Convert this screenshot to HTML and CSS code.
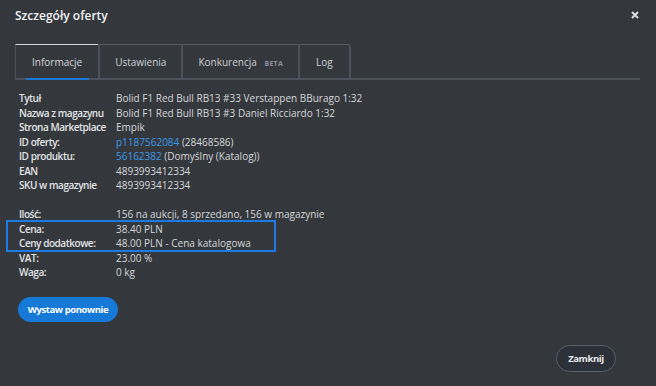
FILE: index.html
```html
<!DOCTYPE html>
<html lang="pl">
<head>
    <meta charset="UTF-8">
    <meta name="viewport" content="width=device-width, initial-scale=1.0">
    <title>Szczegóły oferty</title>
    <link rel="stylesheet" href="styles.css">
</head>
<body>

    <div class="modal">
        <div class="modal-header">
            <h2>Szczegóły oferty</h2>
            <button class="close" aria-label="Zamknij">
                <svg width="8" height="8" viewBox="0 0 8 8"><path d="M1 1L7 7M7 1L1 7" stroke="#dcdde0" stroke-width="2"/></svg>
            </button>
        </div>

        <!-- Tabs -->
        <div class="tabs">
            <div class="tab active"><span>Informacje</span></div>
            <div class="tab"><span>Ustawienia</span></div>
            <div class="tab"><span>Konkurencja <span class="beta">BETA</span></span></div>
            <div class="tab last"><span>Log</span></div>
        </div>

        <!-- Offer details -->
        <div class="details">
            <div class="row"><span class="label">Tytuł</span><span>Bolid F1 Red Bull RB13 #33 Verstappen BBurago 1:32</span></div>
            <div class="row"><span class="label">Nazwa z magazynu</span><span>Bolid F1 Red Bull RB13 #3 Daniel Ricciardo 1:32</span></div>
            <div class="row"><span class="label">Strona Marketplace</span><span>Empik</span></div>
            <div class="row"><span class="label">ID oferty:</span><span><a href="#">p1187562084</a> (28468586)</span></div>
            <div class="row"><span class="label">ID produktu:</span><span><a href="#">56162382</a> (Domyślny (Katalog))</span></div>
            <div class="row"><span class="label">EAN</span><span>4893993412334</span></div>
            <div class="row"><span class="label">SKU w magazynie</span><span>4893993412334</span></div>

            <div class="row spacer"></div>

            <div class="row"><span class="label">Ilość:</span><span>156 na aukcji, 8 sprzedano, 156 w magazynie</span></div>
            <div class="highlight">
                <div class="row"><span class="label">Cena:</span><span>38.40 PLN</span></div>
                <div class="row"><span class="label">Ceny dodatkowe:</span><span>48.00 PLN - Cena katalogowa</span></div>
            </div>
            <div class="row"><span class="label">VAT:</span><span>23.00 %</span></div>
            <div class="row"><span class="label">Waga:</span><span>0 kg</span></div>
        </div>

        <button class="btn-primary">Wystaw ponownie</button>

        <div class="modal-footer">
            <button class="btn-secondary">Zamknij</button>
        </div>
    </div>

</body>
</html>
```

FILE: styles.css
```css
body {
    font-family: "Open Sans", Arial, sans-serif;
    background-color: #34383d;
    color: #dcdde0;
    margin: 0;
    padding: 0;
}

.modal {
    padding: 0 16px 0 15px;
}

.modal-header {
    display: flex;
    justify-content: space-between;
    align-items: center;
    height: 30px;
}

.modal-header h2 {
    margin: 0;
    font-size: 12px;
    font-weight: 600;
    color: #f0f0f2;
}

.close {
    background: none;
    border: none;
    padding: 0;
    margin-right: 1px;
    cursor: pointer;
    display: flex;
}

.tabs {
    display: flex;
    margin-top: 14px;
    border-bottom: 2px solid #4d515b;
    height: 34px;
}

.tab {
    position: relative;
    display: flex;
    align-items: center;
    padding: 0 15px;
    font-size: 10px;
    color: #cdced2;
    border-top: 1px solid #575b66;
    border-left: 2px solid #4d515b;
}

.tab.active {
    border-top-color: #d8d9dc;
    border-left-width: 1px;
    padding: 0 16px;
    color: #d4d5d9;
}

.tab.active::after {
    content: "";
    position: absolute;
    left: 10px;
    right: 9px;
    bottom: -2px;
    height: 2px;
    background-color: #1a78d8;
}

.tab.last {
    border-right: 2px solid #4d515b;
    border-top-right-radius: 3px;
    padding: 0 16px;
}

.beta {
    font-size: 7px;
    font-weight: 700;
    color: #8d9099;
    margin-left: 5px;
    letter-spacing: 0.3px;
}

.details {
    padding: 11px 0 0 4px;
    font-size: 10px;
    line-height: 14.5px;
    color: #d6d7da;
}

.row {
    display: flex;
}

.row.spacer {
    height: 14.5px;
}

.label {
    width: 97px;
    flex-shrink: 0;
    font-weight: 600;
    letter-spacing: -0.45px;
    color: #e2e3e6;
}

a {
    color: #3b98e6;
    text-decoration: none;
}

.highlight {
    position: relative;
}

.highlight::after {
    content: "";
    position: absolute;
    left: -13px;
    top: -2px;
    width: 266px;
    height: 28px;
    border: 2px solid #1a7be6;
}

.btn-primary {
    display: block;
    margin: 17px 0 0 3px;
    width: 100px;
    height: 25px;
    border: none;
    border-radius: 13px;
    background-color: #1679d8;
    color: #ffffff;
    font-family: "Open Sans", Arial, sans-serif;
    font-size: 9.5px;
    font-weight: 700;
    letter-spacing: -0.4px;
    cursor: pointer;
}

.modal-footer {
    display: flex;
    justify-content: flex-end;
    margin-top: 23px;
    padding-right: 24px;
}

.btn-secondary {
    width: 60px;
    height: 27px;
    border: 1px solid #5b5f69;
    border-radius: 14px;
    background-color: #2c3038;
    color: #e6e7ea;
    font-family: "Open Sans", Arial, sans-serif;
    font-size: 9.5px;
    font-weight: 700;
    letter-spacing: -0.4px;
    cursor: pointer;
}
```
